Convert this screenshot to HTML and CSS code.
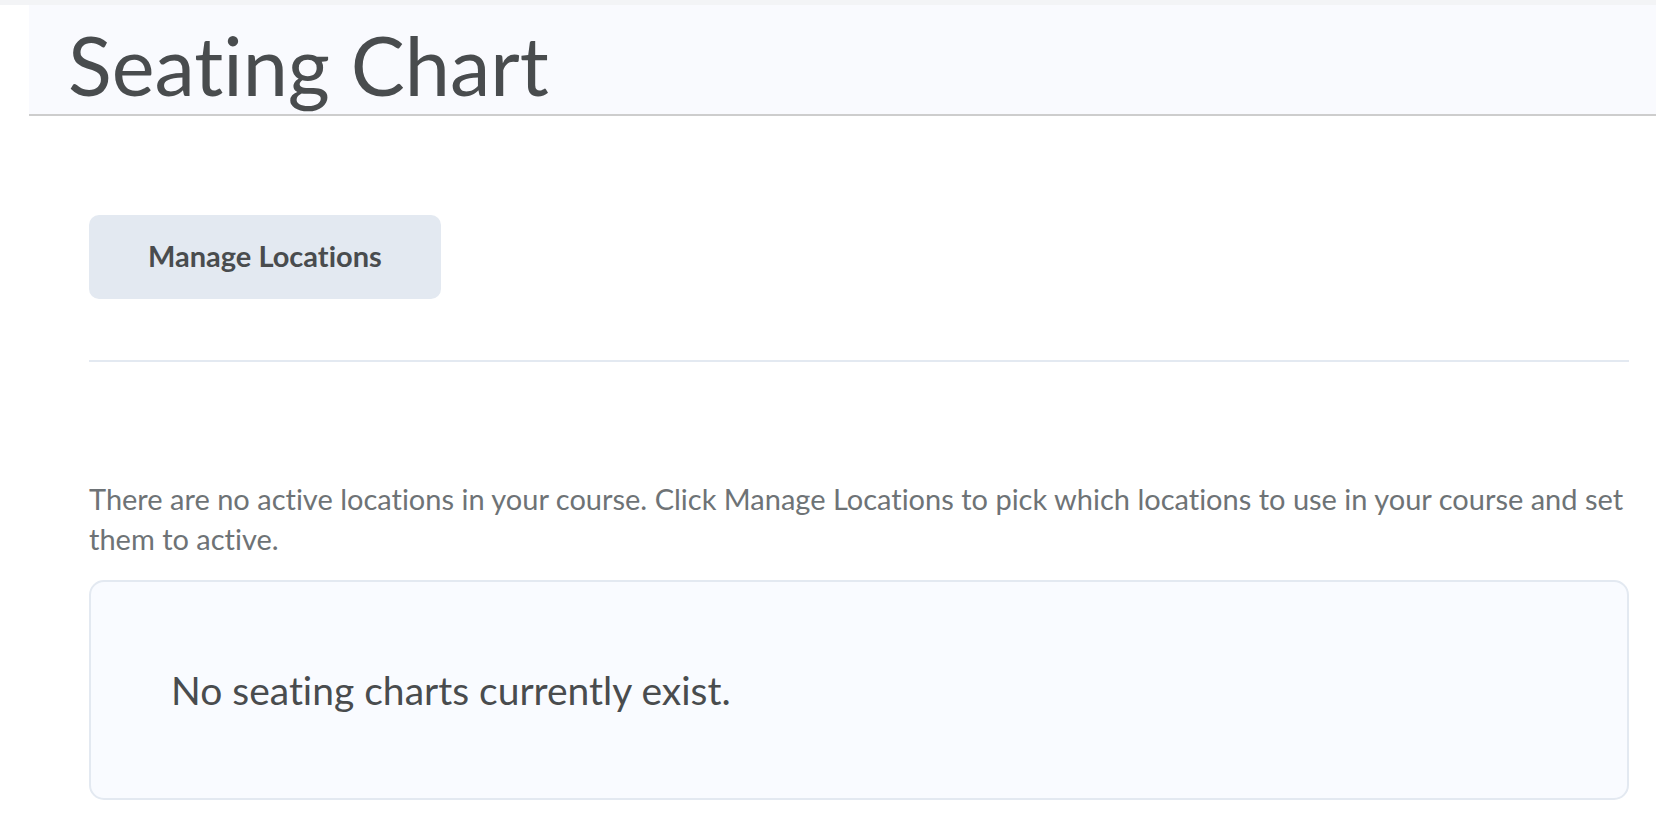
FILE: index.html
```html
<!DOCTYPE html>
<html lang="en">
<head>
<meta charset="utf-8">
<title>Seating Chart</title>
<link rel="stylesheet" href="styles.css">
</head>
<body>
<div class="topbar"></div>
<div class="page">
  <header class="page-header">
    <h1 class="page-title">Seating Chart</h1>
  </header>
  <main class="content">
    <button class="btn-secondary" type="button">Manage Locations</button>
    <hr class="divider">
    <p class="info">There are no active locations in your course. Click Manage Locations to pick which locations to use in your course and set them to active.</p>
    <div class="empty-state">
      <p class="empty-text">No seating charts currently exist.</p>
    </div>
  </main>
</div>
</body>
</html>
```

FILE: styles.css
```css
html, body {
  margin: 0;
  padding: 0;
  background: #ffffff;
}
body {
  font-family: Lato, "Noto Sans", sans-serif;
  font-variant-ligatures: none;
  color: #494c4e;
}
.topbar {
  height: 5px;
  background: #f3f4f6;
}
.page {
  padding-left: 29px;
}
.page-header {
  background: #f9fafe;
  border-bottom: 2px solid #cdcdcd;
  padding-left: 39px;
  box-sizing: border-box;
  height: 111px;
}
.page-title {
  margin: 0;
  font-size: 81px;
  font-weight: 400;
  line-height: 104px;
  padding-top: 8px;
  color: #494c4e;
}
.content {
  padding: 0 27px 40px 60px;
}
.btn-secondary {
  display: block;
  margin-top: 99px;
  height: 84px;
  padding: 0 59px 4px;
  border: none;
  border-radius: 10px;
  background: #e3e9f1;
  color: #494c4e;
  font-family: Lato, "Noto Sans", sans-serif;
  font-variant-ligatures: none;
  font-weight: 700;
  font-size: 29px;
}
.divider {
  margin: 61px 0 0 0;
  border: none;
  height: 2px;
  background: #e3e9f1;
}
.info {
  margin: 117px 0 0 0;
  font-size: 29px;
  line-height: 40px;
  color: #6e7376;
}
.empty-state {
  margin-top: 21px;
  height: 220px;
  box-sizing: border-box;
  border: 2px solid #e3e9f1;
  border-radius: 15px;
  background: #f9fbff;
  display: flex;
  align-items: center;
  padding-left: 80px;
}
.empty-text {
  margin: 0;
  font-size: 39px;
  color: #494c4e;
}
```
